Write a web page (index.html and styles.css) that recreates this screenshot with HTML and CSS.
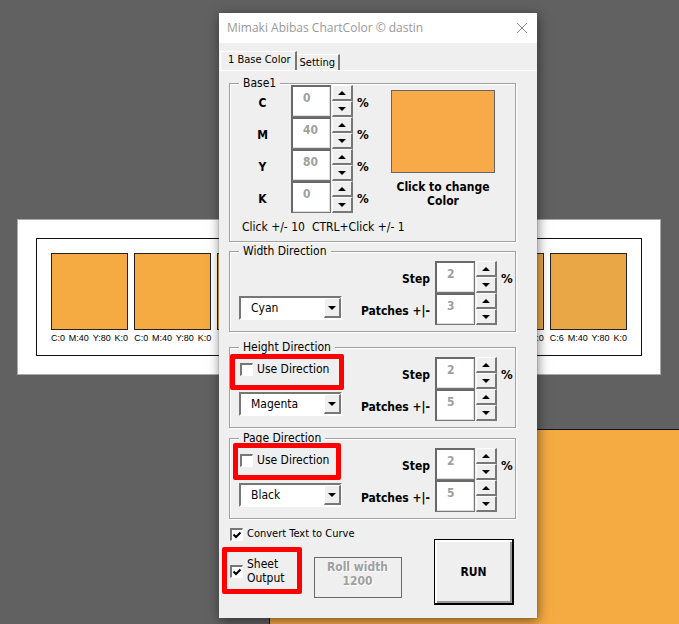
FILE: index.html
```html
<!doctype html>

<html lang="en">

<head>
    <meta charset="UTF-8">
    <title>Mimaki Abibas ChartColor</title>
    <link rel="stylesheet" href="styles.css">
</head>

<body>

    <!-- Drawing area behind the dialog -->
    <div class="sheet">
        <div class="frame">
            <div class="patch"><div class="color c0"></div><div class="cmyk"><span>C:0</span><span>M:40</span><span>Y:80</span><span>K:0</span></div></div>
            <div class="patch"><div class="color c0"></div><div class="cmyk"><span>C:0</span><span>M:40</span><span>Y:80</span><span>K:0</span></div></div>
            <div class="patch"><div class="color c0"></div></div>
            <div class="patch"><div class="color c0"></div></div>
            <div class="patch"><div class="color c0"></div></div>
            <div class="patch"><div class="color c4"></div><div class="cmyk"><span>C:4</span><span>M:40</span><span>Y:80</span><span>K:0</span></div></div>
            <div class="patch"><div class="color c6"></div><div class="cmyk"><span>C:6</span><span>M:40</span><span>Y:80</span><span>K:0</span></div></div>
        </div>
    </div>
    <div class="bigpatch"></div>

    <main class="dialog">

        <div class="titlebar">
            <span>Mimaki Abibas ChartColor © dastin</span>
            <button class="close" aria-label="Close">
                <svg width="12" height="12" viewBox="0 0 12 12"><path d="M1 1L11 11M11 1L1 11" stroke="#888" fill="none"/></svg>
            </button>
        </div>

        <div class="tabs">
            <button class="tab active">1 Base Color</button>
            <button class="tab">Setting</button>
        </div>

        <div class="panel">

            <fieldset class="base">
                <legend>Base1</legend>
                <div class="baseRow">
                    <div class="inks">
                        <div class="ink">
                            <label for="inkC">C</label>
                            <input id="inkC" class="num" value="0" disabled>
                            <div class="spin"><button class="up" aria-label="More cyan"></button><button class="down" aria-label="Less cyan"></button></div>
                            <b>%</b>
                        </div>
                        <div class="ink">
                            <label for="inkM">M</label>
                            <input id="inkM" class="num" value="40" disabled>
                            <div class="spin"><button class="up" aria-label="More magenta"></button><button class="down" aria-label="Less magenta"></button></div>
                            <b>%</b>
                        </div>
                        <div class="ink">
                            <label for="inkY">Y</label>
                            <input id="inkY" class="num" value="80" disabled>
                            <div class="spin"><button class="up" aria-label="More yellow"></button><button class="down" aria-label="Less yellow"></button></div>
                            <b>%</b>
                        </div>
                        <div class="ink">
                            <label for="inkK">K</label>
                            <input id="inkK" class="num" value="0" disabled>
                            <div class="spin"><button class="up" aria-label="More black"></button><button class="down" aria-label="Less black"></button></div>
                            <b>%</b>
                        </div>
                    </div>
                    <div class="preview">
                        <button id="swatch" class="swatch" aria-label="Base color"></button>
                        <label for="swatch">Click to change Color</label>
                    </div>
                </div>
                <div class="hint"><span>Click +/- 10</span><span>CTRL+Click +/- 1</span></div>
            </fieldset>

            <fieldset class="direction">
                <legend>Width Direction</legend>
                <div class="dirRow">
                    <div class="choice">
                        <div class="combo">
                            <select aria-label="Width direction ink"><option>Cyan</option><option>Magenta</option><option>Yellow</option><option>Black</option></select>
                            <span class="drop"></span>
                        </div>
                    </div>
                    <div class="steps">
                        <label for="wStep">Step</label>
                        <input id="wStep" class="num" value="2" disabled>
                        <div class="spin"><button class="up" aria-label="Step up"></button><button class="down" aria-label="Step down"></button></div>
                        <b>%</b>
                        <label for="wPatches">Patches +|-</label>
                        <input id="wPatches" class="num" value="3" disabled>
                        <div class="spin"><button class="up" aria-label="More patches"></button><button class="down" aria-label="Fewer patches"></button></div>
                    </div>
                </div>
            </fieldset>

            <fieldset class="direction height">
                <legend>Height Direction</legend>
                <div class="dirRow">
                    <div class="choice">
                        <label class="check"><input type="checkbox">Use Direction</label>
                        <div class="combo">
                            <select aria-label="Height direction ink"><option>Magenta</option><option>Cyan</option><option>Yellow</option><option>Black</option></select>
                            <span class="drop"></span>
                        </div>
                    </div>
                    <div class="steps">
                        <label for="hStep">Step</label>
                        <input id="hStep" class="num" value="2" disabled>
                        <div class="spin"><button class="up" aria-label="Step up"></button><button class="down" aria-label="Step down"></button></div>
                        <b>%</b>
                        <label for="hPatches">Patches +|-</label>
                        <input id="hPatches" class="num" value="5" disabled>
                        <div class="spin"><button class="up" aria-label="More patches"></button><button class="down" aria-label="Fewer patches"></button></div>
                    </div>
                </div>
                <div class="mark markHeight"></div>
            </fieldset>

            <fieldset class="direction page">
                <legend>Page Direction</legend>
                <div class="dirRow">
                    <div class="choice">
                        <label class="check"><input type="checkbox">Use Direction</label>
                        <div class="combo">
                            <select aria-label="Page direction ink"><option>Black</option><option>Cyan</option><option>Magenta</option><option>Yellow</option></select>
                            <span class="drop"></span>
                        </div>
                    </div>
                    <div class="steps">
                        <label for="pStep">Step</label>
                        <input id="pStep" class="num" value="2" disabled>
                        <div class="spin"><button class="up" aria-label="Step up"></button><button class="down" aria-label="Step down"></button></div>
                        <b>%</b>
                        <label for="pPatches">Patches +|-</label>
                        <input id="pPatches" class="num" value="5" disabled>
                        <div class="spin"><button class="up" aria-label="More patches"></button><button class="down" aria-label="Fewer patches"></button></div>
                    </div>
                </div>
                <div class="mark markPage"></div>
            </fieldset>

            <div class="footer">
                <div class="options">
                    <label class="check small"><input type="checkbox" checked>Convert Text to Curve</label>
                    <div class="output">
                        <label class="check"><input type="checkbox" checked><span>Sheet<br>Output</span></label>
                        <button class="roll" disabled>Roll width<br>1200</button>
                        <div class="mark markSheet"></div>
                    </div>
                </div>
                <button class="run">RUN</button>
            </div>

        </div>

    </main>

</body>

</html>
```

FILE: styles.css
```css
*
{
    box-sizing:       border-box;
}

body
{
    margin:           0;
    min-height:       100vh;
    padding:          13px 0 6px 219px;
    position:         relative;
    overflow:         hidden;
    background-color: #616161;
    color:            #000;
    font-family:      "DejaVu Sans Condensed", "DejaVu Sans", sans-serif;
    font-size:        12px;
    line-height:      14px;
}

button, input, select
{
    margin:           0;
    padding:          0;
    font:             inherit;
    color:            inherit;
    border-radius:    0;
}

/* drawing area */

.sheet
{
    position:         absolute;
    top:              219px;
    left:             17px;
    right:            18px;
    padding:          18px;
    background-color: #fff;
    border:           1px solid #aaa;
}

.frame
{
    display:          flex;
    gap:              6px;
    padding:          14px 14px 10px;
    border:           1px solid #111;
}

.patch
{
    flex:             1;
}

.color
{
    height:           77px;
    border:           1px solid #222;
}

.c0 { background-color: #f5aa42; }
.c4 { background-color: #eea943; }
.c6 { background-color: #eaa745; }

.cmyk
{
    display:          flex;
    justify-content:  space-between;
    padding-top:      1px;
    font-family:      "Liberation Sans", Arial, sans-serif;
    font-size:        9px;
}

.bigpatch
{
    position:         absolute;
    top:              429px;
    left:             269px;
    right:            0;
    bottom:           0;
    background-color: #f5aa42;
    border-top:       1px solid #111;
    border-left:      1px solid #111;
}

/* dialog */

.dialog
{
    position:         relative;
    width:            318px;
    background-color: #efefef;
    box-shadow:       0 0 1px #555, 1px 3px 11px rgba(0, 0, 0, 0.5);
}

.titlebar
{
    display:          flex;
    align-items:      center;
    justify-content:  space-between;
    height:           30px;
    padding:          0 9px 0 8px;
    background-color: #fff;
    color:            #999;
    font-family:      "Open Sans", sans-serif;
}

.close
{
    display:          flex;
    border:           0;
    background:       none;
}

.tabs
{
    display:          flex;
    align-items:      flex-end;
    height:           28px;
    padding-left:     1px;
    border-bottom:    1px solid #fff;
}

.tab
{
    height:           16px;
    padding:          0 3px;
    border:           0;
    border-top:       1px solid #fff;
    border-right:     2px solid #777;
    background-color: #efefef;
    font-size:        11px;
    white-space:      nowrap;
}

.tab.active
{
    height:           19px;
    padding:          0 4px 2px 7px;
    border-left:      1px solid #fff;
}

.panel
{
    padding:          5px 21px 13px 10px;
}

fieldset
{
    position:         relative;
    min-width:        0;
    margin:           0;
    padding:          0;
    border:           1px solid #a0a0a0;
    box-shadow:       1px 1px #fff, inset 1px 1px #fff;
}

legend
{
    margin-left:      9px;
    padding:          0 4px;
    background-color: #efefef;
    line-height:      15px;
}

.base
{
    height:           166px;
}

.direction
{
    height:           88px;
    margin-top:       2px;
}

.direction.height
{
    margin-top:       8px;
}

.direction.page
{
    margin-top:       3px;
}

/* number box with its spin buttons */

.num
{
    width:            40px;
    height:           32px;
    padding:          0 0 8px 10px;
    border:           2px solid #696969;
    border-right:     1px solid #777;
    border-bottom:    1px solid #777;
    background-color: #fff;
    box-shadow:       inset -1px -1px #ddd;
    color:            #a0a0a0;
    font-weight:      bold;
}

.spin
{
    display:          flex;
    flex-direction:   column;
    width:            21px;
    height:           32px;
}

.spin button
{
    display:          flex;
    flex:             1;
    align-items:      center;
    justify-content:  center;
    border:           1px solid #fff;
    border-right:     2px solid #777;
    border-bottom:    2px solid #777;
    background-color: #efefef;
}

.up::before, .down::before, .drop::before
{
    content:          "";
    border:           4px solid transparent;
}

.up::before
{
    border-top:       0;
    border-bottom-color: #000;
}

.down::before, .drop::before
{
    border-bottom:    0;
    border-top-color: #000;
}

/* base color */

.baseRow
{
    display:          flex;
    justify-content:  space-between;
    margin-top:       -6px;
    padding-right:    20px;
}

.ink
{
    display:          grid;
    grid-template-columns: 61px 41px 21px auto;
    align-items:      center;
    font-weight:      bold;
}

.ink label
{
    padding:          4px 0 0 4px;
    text-align:       center;
}

.ink b, .steps b
{
    padding:          4px 0 0 4px;
    font-size:        13px;
}

.preview
{
    display:          flex;
    flex-direction:   column;
    width:            104px;
    padding-top:      5px;
    gap:              7px;
    font-weight:      bold;
    text-align:       center;
}

.swatch
{
    height:           83px;
    border:           1px solid #666;
    background-color: #f9aa48;
}

.hint
{
    display:          flex;
    gap:              7px;
    padding:          7px 0 0 12px;
}

/* directions */

.dirRow
{
    display:          flex;
    justify-content:  space-between;
    padding:          2px 1px 0 9px;
}

.choice
{
    display:          flex;
    flex-direction:   column;
    justify-content:  space-between;
    width:            103px;
    padding-bottom:   5px;
}

.choice .combo
{
    margin-top:       auto;
}

.combo
{
    position:         relative;
    height:           24px;
}

.combo select
{
    width:            100%;
    height:           100%;
    padding-left:     10px;
    appearance:       none;
    border:           2px solid #777;
    border-right-color: #fff;
    border-bottom-color: #fff;
    background-color: #fff;
}

.drop
{
    position:         absolute;
    top:              2px;
    right:            1px;
    bottom:           2px;
    display:          flex;
    align-items:      center;
    justify-content:  center;
    width:            17px;
    border:           1px solid #fff;
    border-right:     2px solid #777;
    border-bottom:    2px solid #777;
    background-color: #efefef;
    pointer-events:   none;
}

.steps
{
    display:          grid;
    grid-template-columns: auto 41px 21px 17px;
    align-items:      center;
    font-weight:      bold;
}

.steps label
{
    padding:          4px 5px 0 0;
    text-align:       right;
}

.check
{
    display:          flex;
    align-items:      center;
    gap:              4px;
    white-space:      nowrap;
}

.choice .check
{
    height:           24px;
    padding-left:     1px;
}

.check input
{
    flex:             none;
    width:            13px;
    height:           13px;
    appearance:       none;
    border:           2px solid #777;
    border-right:     1px solid #fff;
    border-bottom:    1px solid #fff;
    background-color: #fff;
}

.check input:checked
{
    background-image: url("data:image/svg+xml,%3Csvg xmlns='http://www.w3.org/2000/svg' viewBox='0 0 10 10'%3E%3Cpath d='M1.5 4.5L4 7L8.5 2.5' fill='none' stroke='%23000' stroke-width='2'/%3E%3C/svg%3E");
}

.small
{
    height:           16px;
    font-size:        11px;
}

/* bottom row */

.footer
{
    display:          flex;
    align-items:      flex-start;
    justify-content:  space-between;
    padding:          7px 2px 0 1px;
}

.output
{
    position:         relative;
    display:          flex;
    align-items:      flex-start;
    gap:              29px;
    margin-top:       15px;
}

.roll
{
    width:            88px;
    height:           41px;
    padding-bottom:   8px;
    border:           1px solid #696969;
    background-color: #efefef;
    color:            #a0a0a0;
    font-weight:      bold;
    text-shadow:      1px 1px #fff;
}

.run
{
    width:            80px;
    height:           66px;
    margin-top:       13px;
    border:           1px solid #000;
    border-right-width:  2px;
    border-bottom-width: 2px;
    background-color: #efefef;
    box-shadow:       inset 2px 2px #fff, inset -2px -2px #999;
    font-weight:      bold;
}

/* red highlight boxes */

.mark
{
    position:         absolute;
    border:           5px solid #f00;
    border-radius:    2px;
    pointer-events:   none;
}

.markHeight
{
    top:              -1px;
    left:             0;
    width:            114px;
    height:           36px;
}

.markPage
{
    top:              -3px;
    left:             3px;
    width:            108px;
    height:           37px;
}

.markSheet
{
    top:              -10px;
    left:             -8px;
    width:            80px;
    height:           47px;
}
```
